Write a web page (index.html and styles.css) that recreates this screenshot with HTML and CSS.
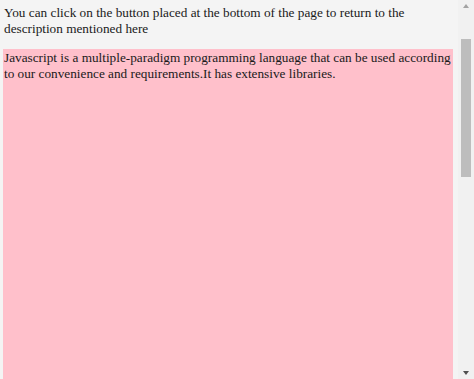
FILE: index.html
```html
<!DOCTYPE html>
<html lang="en">
<head>
    <meta charset="UTF-8">
    <meta name="viewport" content="width=device-width, initial-scale=1.0">
    <title>Return to description</title>
    <link rel="stylesheet" href="styles.css">
</head>
<body>
    <div class="page">
        <div class="content">
            <p class="intro">You can click on the button placed at the bottom of the page to return to the description mentioned here</p>
            <div class="description">Javascript is a multiple-paradigm programming language that can be used according to our convenience and requirements.It has extensive libraries.</div>
        </div>
        <div class="scrollbar">
            <span class="arrow arrow-up"></span>
            <div class="track">
                <div class="thumb"></div>
            </div>
            <span class="arrow arrow-down"></span>
        </div>
    </div>
</body>
</html>
```

FILE: styles.css
```css
body {
    margin: 0;
    background-color: #f4f4f4;
    color: #1a1a1a;
    font-family: "Liberation Serif", "Times New Roman", serif;
    font-size: 13.25px;
    line-height: 16px;
}
.page {
    display: flex;
    height: 379px;
    overflow: hidden;
}
.content {
    flex: 1;
    display: flex;
    flex-direction: column;
    padding: 0 5px 0 3px;
}
.intro {
    margin: 5px 0 12px 1px;
}
.description {
    flex: 1;
    background-color: pink;
    padding: 1px 0 0 1px;
}
.scrollbar {
    width: 16px;
    background-color: #f1f1f1;
    display: flex;
    flex-direction: column;
    align-items: center;
}
.arrow {
    width: 0;
    height: 0;
    border-left: 3px solid transparent;
    border-right: 3px solid transparent;
}
.arrow-up {
    margin-top: 4px;
    border-bottom: 4px solid #a3a3a3;
}
.arrow-down {
    margin-bottom: 4px;
    border-top: 4px solid #505050;
}
.track {
    flex: 1;
    width: 100%;
    display: flex;
    justify-content: center;
    padding-top: 31px;
}
.thumb {
    width: 10px;
    height: 138px;
    background-color: #bdbdbd;
}
```
